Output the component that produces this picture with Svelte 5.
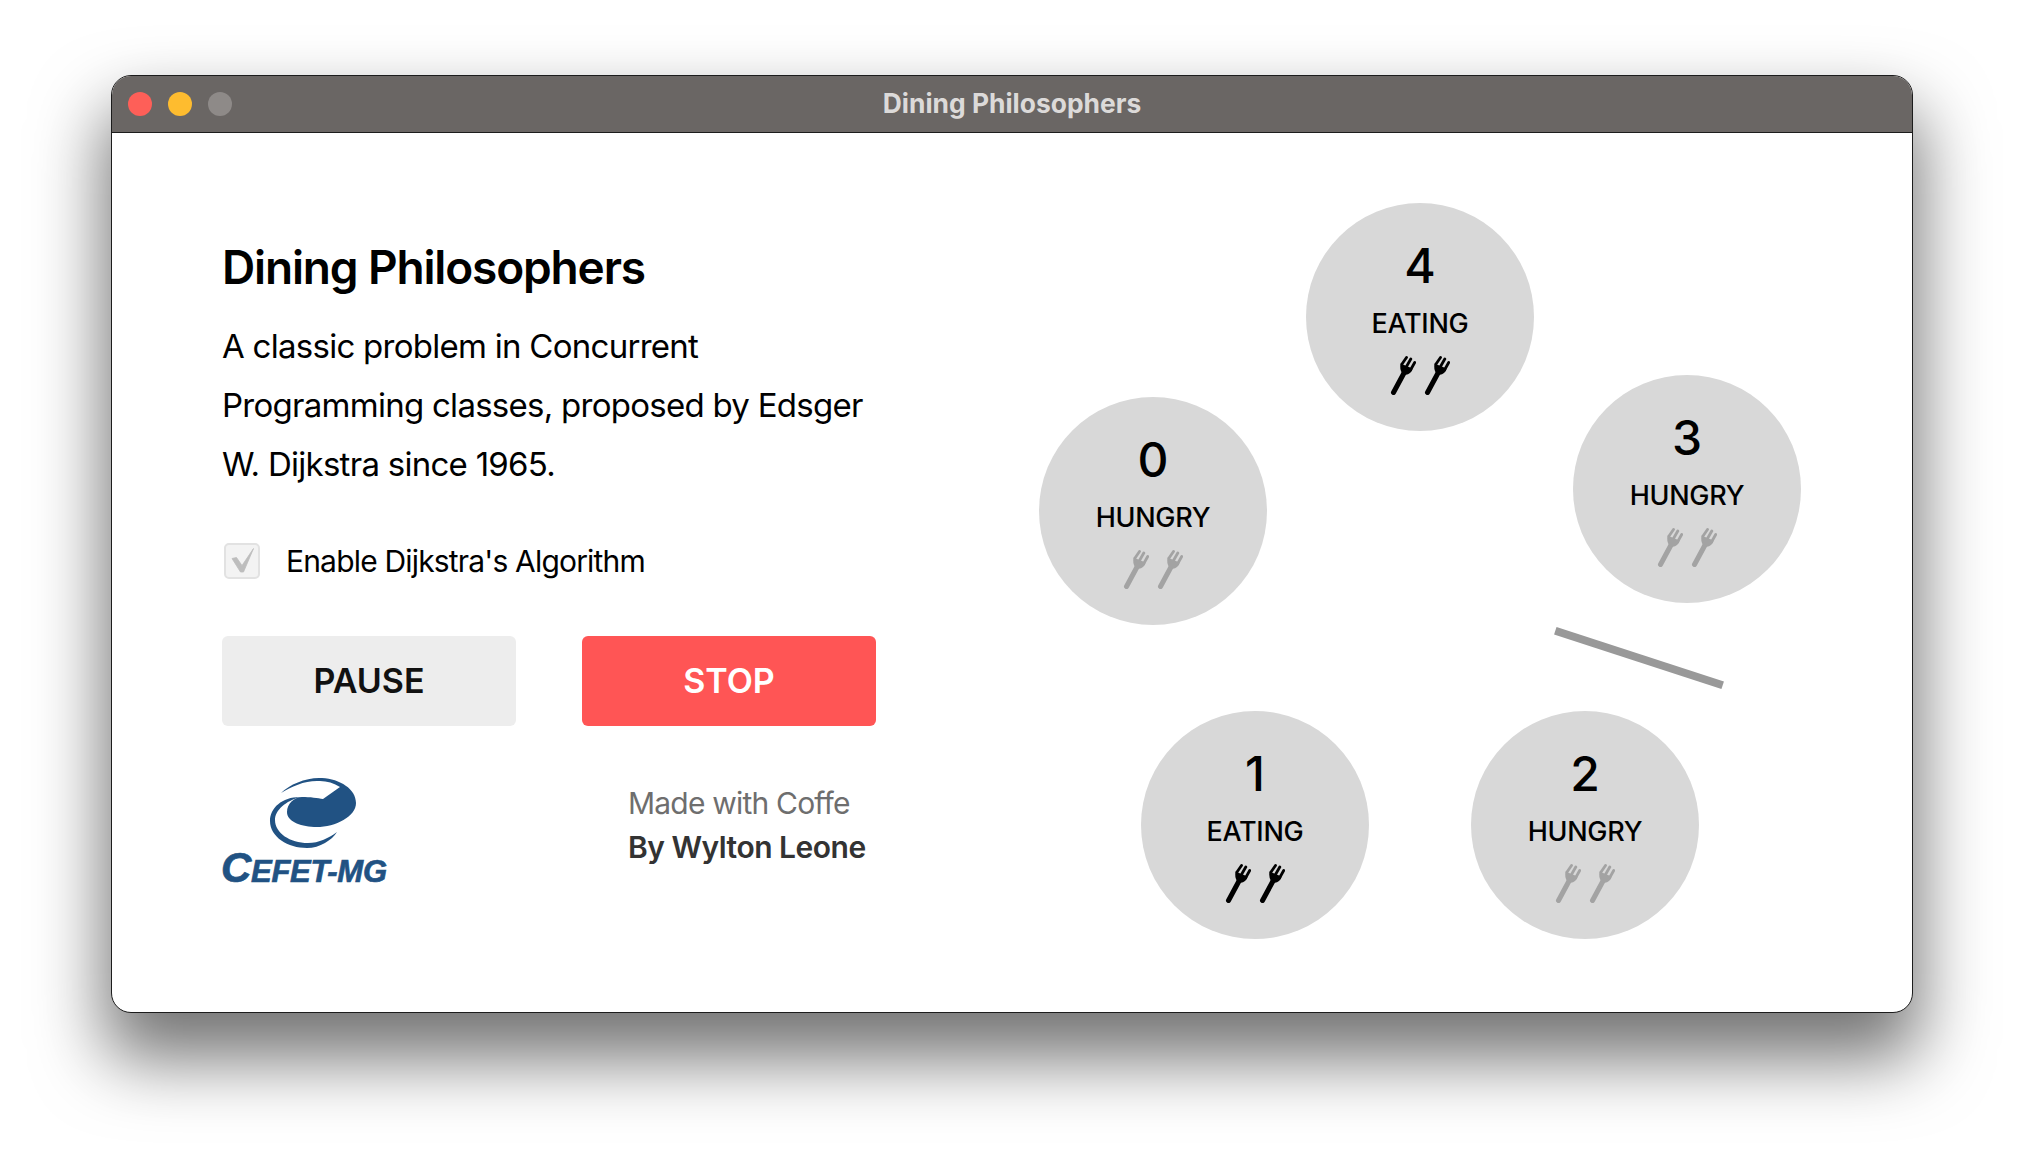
<script>
  const seats = [
    { id: 0, state: 'HUNGRY', x: 1153, y: 511 },
    { id: 1, state: 'EATING', x: 1255, y: 825 },
    { id: 2, state: 'HUNGRY', x: 1585, y: 825 },
    { id: 3, state: 'HUNGRY', x: 1687, y: 489 },
    { id: 4, state: 'EATING', x: 1420, y: 317 }
  ];
  const ox = 112, oy = 133;
</script>

{#snippet fork()}
  <svg class="fork" viewBox="0 0 26 39" aria-hidden="true">
    <path class="line" d="M3.5 36.5 L14 17" stroke-width="5"/>
    <path class="line" d="M12 8 L16.5 1.5 M16.5 10.5 L20.8 3 M20.8 13.5 L24.7 6.5" stroke-width="2.8"/>
    <path class="fill" d="M10.5 7.5 Q9.5 13 12 17 Q16 20.5 20 17 Q22.5 15.5 22.5 12.5 Z"/>
  </svg>
{/snippet}

<div class="window">
  <header class="titlebar">
    <div class="lights">
      <span class="light red"></span>
      <span class="light yellow"></span>
      <span class="light grey"></span>
    </div>
    <div class="wintitle">Dining Philosophers</div>
  </header>
  <main class="content">
    <section class="left">
      <h1>Dining Philosophers</h1>
      <p>A classic problem in Concurrent Programming classes, proposed by Edsger W. Dijkstra since 1965.</p>
      <label class="check">
        <span class="box">
          <svg viewBox="0 0 32 32" aria-hidden="true"><path d="M6 13.5 L10.5 12.5 L16 20.5 L27.5 3.5 L17.5 27 L14.5 27 Z" fill="#bdbdbd" stroke="#bdbdbd" stroke-width="0.8" stroke-linejoin="round"/></svg>
        </span>
        <span>Enable Dijkstra's Algorithm</span>
      </label>
      <div class="buttons">
        <button class="pause">PAUSE</button>
        <button class="stop">STOP</button>
      </div>
      <div class="foot">
        <div class="logo">
          <svg viewBox="0 0 165 72" width="165" height="72" aria-hidden="true">
            <path d="M59 16 C68 7 85 0 100 1 C118 2 134 12 134 26 C134 40 112 51 92 50 C77 49 65 44 65 35 C65 27 72 20 80 20 C88 20 96 21 101 22 L118 10 C112 6 105 4 98 4 C84 3 70 9 59 16 Z" fill="#215283"/>
            <path d="M78 20 C60 20 48 31 48 44 C48 60 66 71 85 71 C98 71 110 63 115 55 C107 61 97 66 86 66 C68 66 53 56 53 43 C53 33 64 24 78 20 Z" fill="#215283"/>
          </svg>
          <div class="logotext"><span class="big">C</span>EFET-MG</div>
        </div>
        <div class="credit">
          <div class="made">Made with Coffe</div>
          <div class="by">By Wylton Leone</div>
        </div>
      </div>
    </section>
    <section class="table">
      <div class="stick"></div>
      {#each seats as s (s.id)}
        <div class="seat" style="left:{s.x - ox - 114}px;top:{s.y - oy - 114}px">
          <div class="num">{s.id}</div>
          <div class="state">{s.state}</div>
          <div class="forks" class:eating={s.state === 'EATING'}>
            {@render fork()}
            {@render fork()}
          </div>
        </div>
      {/each}
    </section>
  </main>
</div>

<style>
  :global(body) {
    margin: 0;
    background: #fff;
  }
  .window {
    position: absolute;
    left: 111px;
    top: 75px;
    width: 1802px;
    height: 938px;
    box-sizing: border-box;
    border: 1px solid #1c1c1c;
    border-radius: 20px;
    background: #fff;
    box-shadow: 0 40px 70px 6px rgba(0, 0, 0, 0.55);
    display: flex;
    flex-direction: column;
    overflow: hidden;
    font-family: Inter, "Liberation Sans", sans-serif;
    color: #000;
  }
  .titlebar {
    position: relative;
    height: 56px;
    box-sizing: content-box;
    flex: none;
    background: #6a6664;
    border-bottom: 1px solid #1c1c1c;
    display: flex;
    align-items: center;
    justify-content: center;
  }
  .lights {
    position: absolute;
    left: 16px;
    top: 16px;
    display: flex;
    gap: 16px;
  }
  .light {
    width: 24px;
    height: 24px;
    border-radius: 50%;
  }
  .red { background: #fe5f58; }
  .yellow { background: #febc2f; }
  .grey { background: #8e8a88; }
  .wintitle {
    font-size: 26.4px;
    font-weight: 700;
    color: #dcdad9;
    padding-bottom: 3px;
  }
  .content {
    flex: 1;
    position: relative;
    display: flex;
  }
  .left {
    width: 654px;
    margin-left: 110px;
    padding-top: 107px;
    flex: none;
  }
  h1 {
    margin: 0 0 23px;
    font-size: 46px;
    line-height: 54px;
    font-weight: 600;
    letter-spacing: -1.15px;
  }
  p {
    margin: 0;
    width: 654px;
    font-size: 33px;
    line-height: 59px;
    letter-spacing: -0.73px;
  }
  .check {
    display: flex;
    align-items: center;
    gap: 26px;
    margin-top: 45px;
    height: 44px;
    font-size: 30px;
    letter-spacing: -0.82px;
  }
  .box {
    width: 36px;
    height: 36px;
    box-sizing: border-box;
    margin-left: 2px;
    border: 2px solid #e2e2e2;
    border-radius: 5px;
    background: #f3f3f3;
    display: block;
  }
  .box svg { width: 32px; height: 32px; display: block; }
  .buttons {
    display: flex;
    gap: 66px;
    margin-top: 53px;
  }
  button {
    width: 294px;
    height: 90px;
    border: 0;
    border-radius: 6px;
    font-family: inherit;
    font-size: 34px;
    font-weight: 600;
    padding: 0 0 2px;
  }
  .pause { background: #ededed; color: #111; }
  .stop { background: #ff5555; color: #fff; }
  .foot {
    display: flex;
    margin-top: 51px;
  }
  .logo {
    width: 165px;
    height: 110px;
    flex: none;
  }
  .logo svg { display: block; }
  .logotext {
    margin-top: 2px;
    margin-left: -1px;
    font-family: "Liberation Sans", sans-serif;
    font-weight: 700;
    font-style: italic;
    font-size: 31px;
    line-height: 34px;
    color: #215283;
    white-space: nowrap;
    letter-spacing: -0.3px;
    -webkit-text-stroke: 0.7px #215283;
  }
  .big { font-size: 42px; line-height: 34px; }
  .credit {
    margin-left: 241px;
    margin-top: 4px;
    font-size: 30px;
    line-height: 44px;
  }
  .made { color: #6e6e6e; letter-spacing: -0.8px; }
  .by { color: #333; font-weight: 600; letter-spacing: -0.5px; }
  .table {
    position: absolute;
    inset: 0;
    pointer-events: none;
  }
  .seat {
    position: absolute;
    width: 228px;
    height: 228px;
    border-radius: 50%;
    background: #d8d8d8;
    text-align: center;
  }
  .num {
    margin-top: 35px;
    font-size: 48px;
    line-height: 56px;
    font-weight: 500;
  }
  .state {
    margin-top: 13px;
    font-size: 27px;
    line-height: 34px;
    font-weight: 500;
    letter-spacing: -0.3px;
  }
  .forks {
    display: flex;
    justify-content: center;
    gap: 8px;
    margin-top: 15px;
    color: #a3a3a3;
  }
  .forks.eating { color: #000; }
  .fork { width: 26px; height: 39px; display: block; }
  .line { fill: none; stroke: currentColor; stroke-linecap: round; }
  .fill { fill: currentColor; }
  .stick {
    position: absolute;
    left: 1439px;
    top: 521px;
    width: 176px;
    height: 8px;
    background: #999;
    transform: rotate(18deg);
  }
</style>
